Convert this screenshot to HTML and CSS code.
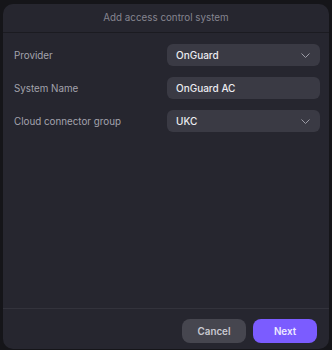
FILE: index.html
```html
<!DOCTYPE html>
<html lang="en">
<head>
    <meta charset="UTF-8">
    <meta name="viewport" content="width=device-width, initial-scale=1.0">
    <title>Add access control system</title>
    <link rel="stylesheet" href="styles.css">
</head>
<body>
    <div class="dialog">
        <header class="dialog-header">Add access control system</header>

        <div class="dialog-body">
            <div class="field">
                <label>Provider</label>
                <div class="select">
                    <span>OnGuard</span>
                    <svg class="chevron" width="9" height="5" viewBox="0 0 9 5"><path d="M0.5 0.5l4 4 4-4" fill="none" stroke="currentColor" stroke-width="1"/></svg>
                </div>
            </div>
            <div class="field">
                <label>System Name</label>
                <div class="input">OnGuard AC</div>
            </div>
            <div class="field">
                <label>Cloud connector group</label>
                <div class="select">
                    <span>UKC</span>
                    <svg class="chevron" width="9" height="5" viewBox="0 0 9 5"><path d="M0.5 0.5l4 4 4-4" fill="none" stroke="currentColor" stroke-width="1"/></svg>
                </div>
            </div>
        </div>

        <footer class="dialog-footer">
            <button class="btn btn-cancel">Cancel</button>
            <button class="btn btn-next">Next</button>
        </footer>
    </div>
</body>
</html>
```

FILE: styles.css
```css
body {
    margin: 0;
    padding: 4px 0 0 3px;
    background-color: #151519;
    font-family: Inter, "Noto Sans", sans-serif;
    overflow: hidden;
}
.dialog {
    width: 326px;
    height: 345px;
    background-color: #26262f;
    border-radius: 10px;
    display: flex;
    flex-direction: column;
}
.dialog-header {
    height: 28px;
    line-height: 27px;
    text-align: center;
    font-size: 9.8px;
    color: #85858f;
    border-bottom: 1px solid #1b1b21;
}
.dialog-body {
    flex: 1;
    padding: 11px 9px 0 11px;
    display: flex;
    flex-direction: column;
    gap: 11px;
}
.field {
    display: flex;
    align-items: center;
    justify-content: space-between;
}
.field label {
    font-size: 9.8px;
    color: #a3a3ad;
}
.select,
.input {
    width: 153px;
    height: 22px;
    box-sizing: border-box;
    padding: 0 10px 0 9px;
    background-color: #3a3a44;
    border-radius: 6px;
    display: flex;
    align-items: center;
    justify-content: space-between;
    font-size: 10px;
    font-weight: 500;
    color: #ececf1;
}
.chevron {
    color: #9c9ca6;
}
.dialog-footer {
    border-top: 1px solid #33333c;
    padding: 10px 12px 6px;
    display: flex;
    justify-content: flex-end;
    gap: 7px;
}
.btn {
    height: 24px;
    width: 64px;
    border: none;
    border-radius: 8px;
    font-family: inherit;
    font-size: 9.8px;
    font-weight: 600;
}
.btn-cancel {
    background-color: #46464f;
    color: #c9c9d1;
}
.btn-next {
    background-color: #7b5cff;
    color: #eeeaff;
}
```
